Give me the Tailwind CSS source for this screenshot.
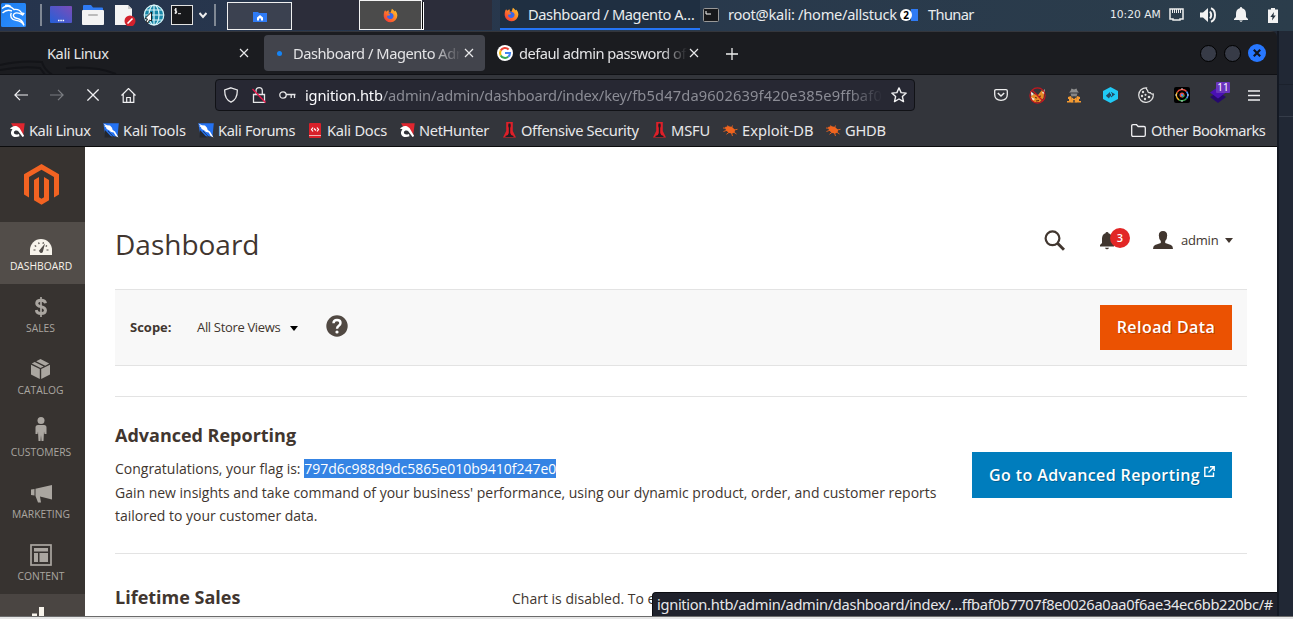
<!DOCTYPE html>
<html lang="en">
<head>
<meta charset="utf-8">
<title>Dashboard / Magento Admin</title>
<script src="https://cdn.jsdelivr.net/npm/@tailwindcss/browser@4"></script>
</head>
<body class="w-[1293px] h-[619px] overflow-hidden bg-[#e6e6e6] whitespace-nowrap font-['Noto_Sans',sans-serif]">
<svg class="absolute size-0">
  <defs>
    <linearGradient id="blue" x1="0" y1="0" x2="1" y2="1"><stop offset="0" stop-color="#1b7df0"/><stop offset="1" stop-color="#2f8fff"/></linearGradient>
    <linearGradient id="desk" x1="0" y1="1" x2="1" y2="0"><stop offset="0" stop-color="#2460d8"/><stop offset="1" stop-color="#7c4cb8"/></linearGradient>
    <linearGradient id="fire" x1="1" y1="0" x2="0" y2="1"><stop offset="0" stop-color="#ffd42e"/><stop offset=".5" stop-color="#ff7a2a"/><stop offset="1" stop-color="#f0283c"/></linearGradient>
    <symbol id="firefox" viewBox="0 0 16 16"><path fill="url(#fire)" d="M1.2 4.500C1.500 3.300 2.500 2.500 2.500 2.500L3.300 4c1-.9 2.400-1.300 3-1.200L6 4.500 8 5l1.500-4.200c1.500.8 2.500 2.200 2.800 3l.5-1.200C14.400 4 15.300 6 15.300 8.300A7.300 7.300 0 0 1 .8 9C.6 7.300.8 6 1.200 4.500z"/><path fill="#3a66e8" d="M5.500 5.300C7 4.600 10.500 5.200 11.200 7.600c.5 2.600-1.500 4.300-3.600 4.200-2.300-.1-3.500-2-3.300-3.600L7 8.100l.5-1.200z"/></symbol>
    <symbol id="tool" viewBox="0 0 16 16"><path fill="#2472f2" d="M.3 1.200h15.500L14.500 14.500 2.500 14z"/><path fill="#24272e" d="M2 8l7 7.500H1.500z"/><path fill="#fff" d="M.5 1.500L4 3.200l3 .3 2 2.200.7 2.300 2.300 1.500 3.500 6-2.800-1.500-2-3.500-2.700-.5L6 8.300 3.600 7 3 5.200.8 3.800l1.700.2z"/><path stroke="#24272e" stroke-width=".7" d="M5 9l6 6.300" fill="none"/></symbol>
    <symbol id="horse" viewBox="0 0 16 16"><path fill="#e0262f" d="M2 1.200h13.700l-1.500 12L9 5.500 4 4.500z"/><path fill="#fff" d="M.8 6.500L3 5C5 3.500 8 3.400 10.500 6l4.700 8-1.700 1-4-5.500C8.500 8 6 8 5 9.700c-.6 2 1 3 3.500 2.700l1.500-.4.5 2.300C7 16 2.300 15 2 11.500c-.2-2 .8-3.300 1.500-4.200z"/></symbol>
    <symbol id="tower" viewBox="0 0 13 16"><path fill="#dd2029" d="M3.200 0h6.600v9l3.200 6.500H0L3.200 9z"/><path fill="#1d1f24" d="M5.500 1.500h2l.3 2.500-.6 2v5l1 2 2.300 1v1H2.500v-1l2.300-1 1-2V6l-.6-2z"/></symbol>
    <symbol id="bug" viewBox="0 0 16 16"><path fill="#f0641e" d="M3 5l2.200-.6.3-1.400 1.200 1.200L10 5l3 2.800-.3 2.400L10.500 11.500 7 11 4 8.500z"/><path d="M1 6l4 .3M1.500 9.500L5 8.200M4.500 12.300L7 10.300M10.500 14l-1-3M14.500 12l-3-2M15.500 7.300l-4 .9M10.500 3.500L9.500 6" stroke="#f0641e" stroke-width=".9" fill="none"/></symbol>
    <symbol id="x" viewBox="0 0 10 10"><path d="M1 1l8 8M9 1L1 9" stroke="#e8e8ea" stroke-width="1.200" fill="none"/></symbol>
  </defs>
</svg>

<!-- Desktop panel -->
<header class="flex h-[31px] items-start overflow-hidden bg-linear-to-r from-[#26344d] to-[#2b3d4b] text-[14.67px] text-[#e9ecee]">
  <svg class="ml-[1px] mt-[3px] size-[25px] shrink-0" viewBox="0 0 25 25"><rect width="25" height="24" rx="1.500" fill="url(#blue)"/><path d="M1 5.500C5 2 10 3 13 6.500c3-.5 6 .5 7.500 3.500l2.200.5-1 1.500c-2.500-1.600-6-3.200-8.600-1.300-1.600 1.600-.6 4 2.400 4.600 4 .8 6.500 3 7.500 7-1.800-3-4.200-4.400-8-4.900C10.300 17 8.600 13 10.300 9.800M1.500 10c3-3 6.500-3.200 9.500-2M4 2.500c2-.5 4-.2 6 1" fill="none" stroke="#fff" stroke-width="1.400"/></svg>
  <div class="ml-[14px] mt-1 h-[22px] w-[2px] shrink-0 bg-[#7f8894]"></div>
  <svg class="ml-2 mt-[6px] h-[17px] w-[22px] shrink-0" viewBox="0 0 22 17"><rect width="22" height="17" rx="1" fill="url(#desk)"/><path d="M8 14.500h1.500M10.300 14.500h1.500M12.600 14.500h1.500" stroke="#fff" stroke-width="1.300"/></svg>
  <svg class="ml-[10px] mt-[5px] h-5 w-[22px] shrink-0" viewBox="0 0 22 20"><path d="M1 1q0-1 1-1h7l2 2.500h9q1 0 1 1V8H1z" fill="#2f7bf5"/><rect y="5" width="22" height="15" rx="1" fill="#f3f3f3"/><rect x="6" y="9" width="10" height="2" rx="1" fill="#bbb"/></svg>
  <svg class="ml-[11px] mt-1 h-[22px] w-[21px] shrink-0" viewBox="0 0 21 22"><path d="M0 1h13l4 4v16H0z" fill="#f4f4f4"/><path d="M13 1v4h4z" fill="#ccc"/><circle cx="15" cy="17" r="5.500" fill="#d3212c"/><path d="M12.500 19.500l5-5" stroke="#fff" stroke-width="1.600"/></svg>
  <svg class="ml-[7px] mt-1 size-[22px] shrink-0" viewBox="0 0 22 22"><circle cx="11" cy="11" r="10" fill="#1887a8"/><g fill="none" stroke="#d8f4f8" stroke-width="1.200"><circle cx="11" cy="11" r="9.800"/><ellipse cx="11" cy="11" rx="5" ry="10"/><path d="M11 1v20M1 11h20M2.500 6h17M2.500 16h17"/></g><path d="M8.500 8v9l-2-1-1.500 3-2-1 1.500-3-2.500-.5z" fill="#fff" stroke="#111" stroke-width=".9"/></svg>
  <svg class="ml-[6px] mt-[5px] h-5 w-[22px] shrink-0" viewBox="0 0 22 20"><rect x=".5" y=".5" width="21" height="19" fill="#17181b" stroke="#e2e2e2"/><path d="M5.800 4H4v1.800h1.600V8H3.500M4.700 3v6M7 8.700h3" stroke="#fff" stroke-width=".9" fill="none"/></svg>
  <svg class="ml-[6px] mt-3 h-[7px] w-2 shrink-0" viewBox="0 0 8 7"><path d="M.5 1L4 5 7.500 1" fill="none" stroke="#eee" stroke-width="2"/></svg>
  <div class="ml-[7px] mt-1 h-[22px] w-[2px] shrink-0 bg-[#7f8894]"></div>
  <div class="ml-[11px] mt-[2px] flex h-7 w-[65px] shrink-0 items-center justify-center border border-[#f0f0f0] bg-[#3b4150]">
    <svg class="mt-[1px] h-[10px] w-[14px]" viewBox="0 0 14 10"><path d="M0 0h5l1 1h8v9H0z" fill="#2f7bf5"/><path d="M7 3l3 2.500V8.500H8V6.500H6v2H4V5.500z" fill="#fff"/></svg>
  </div>
  <div class="flex h-[30px] w-[200px] shrink-0 bg-[#2c2d3a]">
    <div class="ml-[67px] flex h-[30px] w-[65px] shrink-0">
      <div class="flex h-[30px] w-[63px] items-center justify-center border border-[#f4f4f4] bg-[#4b4b4b]"><svg class="size-[15px]"><use href="#firefox"/></svg></div>
      <div class="mt-[2px] h-7 w-[2px] border-r border-b border-white bg-black"></div>
    </div>
  </div>
  <div class="ml-2 flex h-[30px] w-[200px] shrink-0 border-b-2 border-[#2474f5] bg-[#1f2f41]">
    <svg class="ml-1 mt-[7px] size-[15px] shrink-0"><use href="#firefox"/></svg>
    <div class="ml-[9px] w-[168px] leading-[29px] tracking-[-0.42px]">Dashboard / Magento A…</div>
  </div>
  <svg class="ml-[3px] mt-2 h-[14px] w-4 shrink-0" viewBox="0 0 16 14"><rect x=".5" y=".5" width="15" height="13" rx="1" fill="#17181b" stroke="#999"/><path d="M3 3v3h2M5 6h3" stroke="#fff" fill="none"/></svg>
  <div class="ml-[9px] w-[172px] shrink-0 leading-[29px] tracking-[-0.29px]">root@kali: /home/allstuck</div>
  <div class="mt-[9px] flex h-3 w-[18px] shrink-0 bg-linear-to-r from-transparent from-60% to-[#2f7bf5] to-60%"><div class="size-3 rounded-full bg-white text-center text-[10px] leading-3 font-bold text-black">2</div></div>
  <div class="ml-[10px] w-[182px] shrink-0 leading-[29px] tracking-[-0.65px]">Thunar</div>
  <div class="w-[59px] shrink-0 font-['DejaVu_Sans',sans-serif] text-[10.700px] leading-[29px]">10:20 AM</div>
  <svg class="mt-2 h-[13px] w-[15px] shrink-0" viewBox="0 0 15 13"><path d="M1 1h13v10H11v1H4v-1H1z" fill="none" stroke="#eee" stroke-width="1.500"/><path d="M3.500 1v4M5.500 1v4M7.500 1v4M9.500 1v4M11.500 1v4" stroke="#eee" stroke-width="1"/></svg>
  <svg class="ml-4 mt-[7px] h-4 w-[18px] shrink-0" viewBox="0 0 18 16"><path d="M0 5.500h3L8 1v14L3 10.500H0z" fill="#f2f2f2"/><path d="M10 4.500q2.500 3.500 0 7M11 1.300q4 1.500 4 6.700t-4 6.700" fill="none" stroke="#f2f2f2" stroke-width="2"/></svg>
  <svg class="ml-[16px] mt-[7px] h-[15px] w-[14px] shrink-0" viewBox="0 0 14 15"><path d="M7 0q1 0 1.200 1.300C11 2 12 4 12 7v3l2 2v1H0v-1l2-2V7c0-3 1-5 3.800-5.700Q6 0 7 0zM5 13.500h4L7 15z" fill="#f2f2f2"/></svg>
  <svg class="ml-5 mt-2 h-[15px] w-[10px] shrink-0" viewBox="0 0 10 15"><path d="M0 1.500h3V0h4v1.500h3V15H0z" fill="#f2f2f2"/><path d="M6 4L2.300 9h2.200L4 12.500 7.800 7.500H5.500z" fill="#26333f"/></svg>
</header>

<div class="flex h-[585px] bg-[#212835]">
  <!-- Browser window -->
  <main class="relative flex w-[1277px] shrink-0 flex-col overflow-hidden rounded-tr-md">
    <div class="relative flex h-11 shrink-0 overflow-hidden border-t border-b border-t-[#34363c] border-b-[#101115] bg-[#1b1c20] text-[14.67px] text-[#e4e4e6]">
      <svg class="absolute left-0 top-[28px] h-4 w-[130px]" viewBox="0 0 130 16"><path d="M0 5Q20 0 42 2q2 8 12 14M0 10q22-4 40-2l6 8M66 8q30-2 50 6" fill="none" stroke="#131418" stroke-width="2"/></svg>
      <div class="relative flex w-[264px] shrink-0 items-center"><div class="ml-[47px] w-[192px] tracking-[-0.45px]">Kali Linux</div><svg class="size-[10px]"><use href="#x"/></svg></div>
      <div class="mt-[3px] flex h-9 w-[221px] shrink-0 items-center rounded bg-[#42444c]">
        <div class="ml-[13px] size-[5px] rounded-full bg-[#1584f5]"></div>
        <div class="ml-[11px] w-[168px] overflow-hidden mask-r-from-83% tracking-[-0.47px]">Dashboard / Magento Adn</div>
        <svg class="ml-[3px] size-[10px]"><use href="#x"/></svg>
      </div>
      <div class="flex w-[225px] shrink-0 items-center">
        <svg class="ml-3 size-4" viewBox="0 0 16 16"><circle cx="8" cy="8" r="8" fill="#fff"/><g fill="none" stroke-width="2.100"><path d="M11.600 4.500A5 5 0 0 0 3.700 5.600" stroke="#ea4335"/><path d="M3.700 5.600a5 5 0 0 0 0 4.800" stroke="#fbbc05"/><path d="M3.700 10.400a5 5 0 0 0 7.500 1.400" stroke="#34a853"/><path d="M11.200 11.800A5 5 0 0 0 13 8H8" stroke="#4285f4"/></g></svg>
        <div class="ml-[6px] w-[168px] overflow-hidden mask-r-from-85% tracking-[-0.5px]">defaul admin password of</div>
        <svg class="ml-[2px] size-[10px]"><use href="#x"/></svg>
      </div>
      <svg class="ml-4 mt-[16px] size-3" viewBox="0 0 12 12"><path d="M6 0v12M0 6h12" stroke="#eee" stroke-width="1.300"/></svg>
      <div class="ml-auto mr-[11px] flex items-center gap-[7px]">
        <div class="size-[17px] rounded-full border border-black bg-[#373b47]"></div>
        <div class="size-[17px] rounded-full border border-black bg-[#373b47]"></div>
        <svg class="size-[18px]" viewBox="0 0 18 18"><circle cx="9" cy="9" r="9" fill="#2777ff"/><path d="M5.800 5.800l6.400 6.400M12.200 5.800l-6.400 6.400" stroke="#10131c" stroke-width="2.200"/></svg>
      </div>
    </div>

    <!-- Toolbar -->
    <div class="flex h-10 shrink-0 items-center bg-[#33353b]">
      <svg class="ml-[14px] h-3 w-[14px]" viewBox="0 0 14 12"><path d="M14 6H1M6 .8L.9 6 6 11.200" fill="none" stroke="#f0f0f2" stroke-width="1.200"/></svg>
      <svg class="ml-[22px] h-3 w-[14px]" viewBox="0 0 14 12"><path d="M0 6h13M8 .8L13.100 6 8 11.200" fill="none" stroke="#7b7d82" stroke-width="1.200"/></svg>
      <svg class="ml-[23px] size-3" viewBox="0 0 12 12"><path d="M.4.400l11.200 11.200M11.600.400L.4 11.600" stroke="#f0f0f2" stroke-width="1.300"/></svg>
      <svg class="ml-[22px] size-[15px]" viewBox="0 0 15 15"><path d="M.5 7.500l7-7 7 7M2.200 6v8.300h10.600V6M5.700 14V9.500h3.600V14" fill="none" stroke="#f0f0f2" stroke-width="1.200"/></svg>
      <div class="ml-[79px] flex h-8 w-[700px] items-center rounded border border-[#111216] bg-[#272833]">
        <svg class="ml-2 h-4 w-[14px]" viewBox="0 0 14 16"><path d="M7 .8L13.300 3C13.500 9 11.500 13.200 7 15.200 2.500 13.200.5 9 .7 3z" fill="none" stroke="#e6e6e8" stroke-width="1.300"/></svg>
        <svg class="ml-[14px] h-4 w-[14px]" viewBox="0 0 14 16"><path d="M1.500 7.500h11v7.800h-11zM4 7.500V4q0-3.300 3.200-3.300T10.300 4v3.500" fill="none" stroke="#e6e6e8" stroke-width="1.300"/><path d="M.5 2l13 13.500" stroke="#e8174b" stroke-width="1.400"/></svg>
        <svg class="ml-[13px] h-[10px] w-[17px]" viewBox="0 0 17 10"><circle cx="4" cy="5" r="3.200" fill="none" stroke="#e6e6e8" stroke-width="1.300"/><path d="M7 4.500h9.500M12.200 4.500V8M15.500 4.500V8" stroke="#e6e6e8" stroke-width="1.300"/></svg>
        <div class="ml-[9px] w-[578px] overflow-hidden text-[14.67px] tracking-[-0.18px] text-[#8b8c95] mask-r-from-94%"><span class="text-[#fbfbfe]">ignition.htb</span>/admin/admin/dashboard/index/key/<span class="tracking-[.15px]">fb5d47da9602639f420e385e9ffbaf0</span></div>
        <svg class="ml-[8px] size-4 shrink-0" viewBox="0 0 16 16"><path d="M8 .9l2.100 4.700 5.100.5-3.800 3.500 1.100 5L8 12l-4.500 2.600 1.100-5L.8 6.100l5.100-.5z" fill="none" stroke="#f0f0f2" stroke-width="1.400" stroke-linejoin="round"/></svg>
      </div>
      <div class="ml-auto mr-[17px] flex items-center">
        <svg class="h-3 w-[14px]" viewBox="0 0 14 12"><path d="M2 .7h10q1.300 0 1.300 1.300v3.500q0 5.800-6.300 5.800T.7 5.500V2Q.7.700 2 .7z" fill="none" stroke="#eee" stroke-width="1.300"/><path d="M3.800 4L7 7l3.200-3" fill="none" stroke="#eee" stroke-width="1.500"/></svg>
        <svg class="ml-[21px] size-[17px]" viewBox="0 0 17 17"><path d="M2 9l3-2 4 1 4-5 2 4-.5 4-3.500 4-5 .5-3-2z" fill="#e88a26"/><path d="M1.500 4l3.500 3-2.500 2zM15.500 2v5l-2.500-1zM2 10l4 2-2 1.500z" fill="#f3e6d8"/><path d="M6 10.500l2 .5M10 9.500l2-.5M7 14l3-.5" stroke="#5a2b14"/><circle cx="8.500" cy="8.500" r="7.600" fill="none" stroke="#c5171e" stroke-width="1.200"/><path d="M3 3l11 11" stroke="#c5171e" stroke-width="1.300"/></svg>
        <svg class="ml-[21px] h-[15px] w-[14px]" viewBox="0 0 14 15"><path d="M3.500 3L4.500.5 7 1.500 9.500.5l1 2.500 1.500 1.500H2z" fill="#8d8d8d"/><path d="M3.500 5.500h7L9.500 8.500h-5z" fill="#858585"/><path d="M1 9l3-1 1.500 6.500H0V13h2v-2H1zM13 9l-3-1-1.500 6.500H14V13h-2v-2h1z" fill="#f49a31"/><path d="M4.500 9l2.500 2 2.500-2v5.500h-5z" fill="#f49a31"/><path d="M5.500 8.500L7 11l1.500-2.500zM6.300 12h1.400v2.500H6.300z" fill="#383b42"/></svg>
        <svg class="ml-[22px] h-4 w-[15px]" viewBox="0 0 15 16"><path d="M7.500 0L15 4v8l-7.500 4L0 12V4z" fill="#20c9f5"/><path d="M2.800 8.800L7 5v2l2-1v2.500L7 9.500l-1 2zM12.200 7.200L8 5v5.500z" fill="#234a64"/></svg>
        <svg class="ml-[20px] size-4" viewBox="0 0 16 16"><path d="M8.500.8A7.300 7.300 0 1 0 15.200 7q-2 .5-2.800-1.300Q9.500 6 9.600 3.300 8 2.500 8.500.8z" fill="none" stroke="#ddd" stroke-width="1.300"/><g fill="#ddd"><circle cx="5" cy="5" r="1.200"/><circle cx="4" cy="9" r="1.200"/><circle cx="7.500" cy="7.800" r="1.100"/><circle cx="7" cy="12" r="1.200"/><circle cx="11" cy="10" r="1.300"/></g></svg>
        <svg class="ml-[20px] size-4" viewBox="0 0 16 16"><rect width="16" height="16" rx="2" fill="#000"/><g fill="none" stroke-width="1.500"><path d="M3 5.500A5.700 5.700 0 0 1 12.500 4.500" stroke="#e84a3a"/><path d="M12.500 4.500a5.700 5.700 0 0 1 0 7" stroke="#4a8df0"/><path d="M12.500 11.500a5.700 5.700 0 0 1-7.500 1.300" stroke="#37a853"/><path d="M5 12.800A5.700 5.700 0 0 1 3 5.500" stroke="#f3b52a"/></g><path d="M8 1v2M8 13v2M1 8h2M13 8h2" stroke="#ccc"/><circle cx="8" cy="8" r="2.500" fill="#e84a3a"/><path d="M8 8h2.500A2.500 2.500 0 0 1 8 10.500z" fill="#37a853"/><circle cx="8" cy="8" r="1.200" fill="#4a8df0"/></svg>
        <div class="relative ml-[20px] size-4"><svg class="size-4" viewBox="0 0 16 16"><path d="M8 5l8 5-8 6-8-6z" fill="#26086e"/><path d="M8 0l8 5.500-8 6-8-6z" fill="#4a10b4"/></svg><span class="absolute -top-[5px] left-[6px] h-[11px] w-[14px] rounded-[1px] bg-[#6a35bd] text-center text-[10px] leading-[11px] text-white">11</span></div>
        <svg class="ml-[22px] h-[11px] w-3" viewBox="0 0 12 11"><path d="M0 1h12M0 5.500h12M0 10h12" stroke="#f0f0f2" stroke-width="1.300"/></svg>
      </div>
    </div>

    <!-- Bookmarks -->
    <div class="flex h-8 shrink-0 items-center border-b border-[#0c0c0d] bg-[#33353b] pb-[1px] text-[14.67px] text-[#e8e8ea]">
      <svg class="ml-[9px] size-4"><use href="#horse"/></svg><div class="ml-1 w-[74px] tracking-[-0.45px]">Kali Linux</div>
      <svg class="size-4"><use href="#tool"/></svg><div class="ml-1 w-[75px] tracking-[-0.15px]">Kali Tools</div>
      <svg class="size-4"><use href="#tool"/></svg><div class="ml-1 w-[91px] tracking-[-0.35px]">Kali Forums</div>
      <svg class="h-[15px] w-[12px]" viewBox="0 0 12 15"><rect width="12" height="15" rx="1" fill="#d8202a"/><path d="M0 12.500h12" stroke="#f7d5d5" stroke-width=".8"/><path d="M4 4.500L2.500 6.500l1.500 2M8 4.500l1.500 2-1.500 2M5 5.500l2 2" stroke="#fff" fill="none" stroke-width="1.200"/></svg><div class="ml-[6px] w-[72px] tracking-[-0.25px]">Kali Docs</div>
      <svg class="size-4"><use href="#horse"/></svg><div class="ml-1 w-[84px] tracking-[-0.38px]">NetHunter</div>
      <svg class="h-4 w-[13px]"><use href="#tower"/></svg><div class="ml-[5px] w-[132px] tracking-[-0.37px]">Offensive Security</div>
      <svg class="h-4 w-[13px]"><use href="#tower"/></svg><div class="ml-[5px] w-[51px] tracking-[-0.15px]">MSFU</div>
      <svg class="size-4"><use href="#bug"/></svg><div class="ml-1 w-[83px]">Exploit-DB</div>
      <svg class="size-4"><use href="#bug"/></svg><div class="ml-1 tracking-[-0.25px]">GHDB</div>
      <svg class="ml-auto h-[13px] w-[15px]" viewBox="0 0 15 13"><path d="M.7 2q0-1.300 1.300-1.300h3.500l1.700 1.800H13q1.300 0 1.300 1.300V11q0 1.300-1.300 1.300H2Q.7 12.300.7 11z" fill="none" stroke="#f0f0f2" stroke-width="1.300"/></svg>
      <div class="ml-[5px] w-[126px] tracking-[-0.5px]">Other Bookmarks</div>
    </div>

    <!-- Page -->
    <div class="flex min-h-0 flex-1 bg-white font-['Open_Sans',sans-serif] text-[#41362f]">
      <nav class="w-[85px] shrink-0 overflow-hidden bg-[#373330] text-[10.300px] leading-[14px] text-[#aaa6a0]">
        <div class="flex h-[75px] justify-center pr-[2px] pt-[17px]"><svg class="h-[41px] w-[35px]" viewBox="0 0 35 41"><path fill="#f26322" d="M17.500 0L35 10.200v20.300l-5 2.900V13L17.500 5.800 5 13v20.400l-5-2.900V10.200z"/><path fill="#f26322" d="M10 15.900l5-2.900v20.300l2.500 1.500 2.500-1.500V13l5 2.900v20.300L17.500 40.800 10 36.300z"/></svg></div>
        <div class="flex h-[62px] flex-col items-center bg-[#524d49] pr-[3px] text-[#f7f3eb]"><div class="flex h-[37px] items-end pb-1"><svg class="h-4 w-[22px]" viewBox="0 0 22 16"><path d="M0 16v-5a11 11 0 0 1 22 0v5z" fill="#f7f3eb"/><path d="M3.500 11h2M4.700 6.500l1.500 1M8.500 3.500l.7 1.500M13.500 3.300l-.6 1.500M17 6.500l-1.300 1M18.500 11h-2" stroke="#524d49" stroke-width="1.200"/><path d="M15 4.500L12.800 13a2 2 0 0 1-3.600-1.500z" fill="#524d49"/></svg></div><div>DASHBOARD</div></div>
        <div class="flex h-[62px] flex-col items-center pr-[4px]"><div class="flex h-[37px] items-end pb-1"><svg class="h-5 w-3" viewBox="0 0 12 20"><path d="M10.500 6.200Q10 3.300 6 3.300T1.700 6.200Q1.700 8.800 6 9.600t4.500 3.700Q10.300 16.500 6 16.500T1.300 13" fill="none" stroke="#aaa6a0" stroke-width="2.900"/><path d="M6 0v20" stroke="#aaa6a0" stroke-width="1.700"/></svg></div><div>SALES</div></div>
        <div class="flex h-[62px] flex-col items-center pr-[4px]"><div class="flex h-[37px] items-end pb-[4px]"><svg class="h-5 w-[19px]" viewBox="0 0 19 20"><path fill="#aaa6a0" d="M0 5.800l8.800 4.300V20L0 15.500zM19 5.800l-8.800 4.300V20l8.800-4.500zM.8 4.500L3.700 3l9 4.400-3.200 1.500zM5.200 2.300L9.500 0l8.700 4.500-4 2.200z"/></svg></div><div>CATALOG</div></div>
        <div class="flex h-[62px] flex-col items-center pr-[3px]"><div class="flex h-[37px] items-end pb-1"><svg class="h-6 w-3" viewBox="0 0 12 24"><circle cx="6" cy="3.500" r="3.500" fill="#aaa6a0"/><path fill="#aaa6a0" d="M3 8h6q2.500 0 2.500 2.500V17h-2l-.5-2.500L8.500 24h-2L6 18l-.5 6h-2L3 14.500 2.500 17h-2v-6.500Q.5 8 3 8z"/></svg></div><div>CUSTOMERS</div></div>
        <div class="flex h-[62px] flex-col items-center pr-[3px]"><div class="flex h-[37px] items-end pb-1"><svg class="h-[18px] w-[22px]" viewBox="0 0 22 18"><path fill="#aaa6a0" d="M22 0v14.500L10 11.500l1 6H8L5.500 11V3.700zM4.500 4v6.500L1 10V4.500z"/></svg></div><div>MARKETING</div></div>
        <div class="flex h-[62px] flex-col items-center pr-[3px]"><div class="flex h-[37px] items-end pb-[3px]"><svg class="size-[22px]" viewBox="0 0 22 22"><rect x="1" y="1" width="20" height="20" fill="none" stroke="#aaa6a0" stroke-width="1.700"/><path fill="#aaa6a0" d="M4 4h14v3.500H4zM4 9h4v9H4zM9.500 9H18v9H9.500z"/></svg></div><div>CONTENT</div></div>
        <div class="flex h-[31px] justify-center bg-[#4a4542] pt-[13px] pr-[3px]"><svg class="h-5 w-5" viewBox="0 0 20 20"><path fill="#f7f3eb" d="M1 6.500h5V20H1zM8 0h5v20H8zM15 9h4v11h-4z"/></svg></div>
      </nav>

      <section class="flex min-w-0 flex-1 flex-col pl-[30px] pr-[30px]">
        <div class="flex h-[142px] shrink-0 pt-[77px]">
          <h1 class="text-[28px] leading-10">Dashboard</h1>
          <div class="ml-auto mr-[14px] mt-[2px] flex h-7 items-center">
            <svg class="size-[21px]" viewBox="0 0 21 21"><circle cx="8.500" cy="8.300" r="6.900" fill="none" stroke="#41362f" stroke-width="2.200"/><path d="M13.500 13.300l6.500 6.500" stroke="#41362f" stroke-width="3"/></svg>
            <div class="relative ml-[35px] h-5 w-[30px]"><svg class="mt-[2px] h-[18px] w-[14px]" viewBox="0 0 14 18"><path fill="#41362f" d="M7 0q1.500 0 1.500 1.300C11 2 12 4 12 7v4l2 2v1.500H0V13l2-2V7c0-3 1-5 3.500-5.700Q5.500 0 7 0zM5 15.700h4q-.5 1.600-2 1.600t-2-1.600z"/></svg><span class="absolute -top-[2px] left-[10px] size-5 rounded-full bg-[#e22626] text-center text-[11px] leading-5 font-semibold text-white">3</span></div>
            <svg class="ml-[23px] h-[18px] w-[20px]" viewBox="0 0 20 18"><path fill="#41362f" d="M10 0q4.200 0 4.200 4.500 0 3.500-2 5.500v2l5.800 2q2 .8 2 4H0q0-3.200 2-4l5.800-2v-2q-2-2-2-5.500Q5.800 0 10 0z"/></svg>
            <div class="ml-2 mt-[1px] w-[44px] text-[13px] tracking-[-0.2px]">admin</div>
            <svg class="h-[5px] w-2" viewBox="0 0 8 5"><path d="M0 0h8L4 5z" fill="#41362f"/></svg>
          </div>
        </div>
        <div class="flex h-[77px] w-[1132px] shrink-0 items-center border-y border-[#e3e3e3] bg-[#f8f8f8] text-[13px]">
          <div class="ml-[15px] w-[67px] font-bold">Scope:</div>
          <div class="w-[93px] tracking-[-0.33px]">All Store Views</div>
          <svg class="mt-[2px] h-[5px] w-2" viewBox="0 0 8 5"><path d="M0 0h8L4 5z" fill="#000"/></svg>
          <svg class="mb-[3px] ml-[28px] size-[22px]" viewBox="0 0 22 22"><circle cx="11" cy="11" r="10.700" fill="#514943"/><path d="M7.500 8.300Q7.500 5 11 5t3.500 3q0 1.500-1.700 2.700T11 13.700" fill="none" stroke="#fff" stroke-width="2.400"/><circle cx="11" cy="17" r="1.600" fill="#fff"/></svg>
          <div class="ml-auto mr-[15px] h-[45px] w-[132px] bg-[#eb5202] text-center text-[16px] leading-[45px] font-semibold tracking-[.45px] text-white text-shadow-[1px_1px_0_rgba(0,0,0,.25)]">Reload Data</div>
        </div>
        <div class="mt-[30px] flex h-[158px] w-[1132px] shrink-0 border-y border-[#e3e3e3]">
          <div class="w-[857px] pt-[24px] text-[14px] leading-[23.500px] tracking-[-0.01px]">
            <h2 class="mb-2 text-[18px] leading-7 font-bold">Advanced Reporting</h2>
            <p>Congratulations, your flag is: <span class="bg-[#3584e4] tracking-[0px] text-white">797d6c988d9dc5865e010b9410f247e0</span></p>
            <p>Gain new insights and take command of your business' performance, using our dynamic product, order, and customer reports<br>tailored to your customer data.</p>
          </div>
          <div class="mt-[55px] flex h-[46px] w-[260px] items-center bg-[#007dbd] pl-[17px] text-[16px] font-semibold tracking-[.4px] text-white text-shadow-[1px_1px_0_rgba(0,0,0,.25)]"><div class="w-[215px]">Go to Advanced Reporting</div><svg class="mb-[7px] size-[11px]" viewBox="0 0 11 11"><path d="M4.500 1.500H.8v8.700h8.700V6.500M6 .8h4.200V5M10 1L4.500 6.500" fill="none" stroke="#fff" stroke-width="1.400"/></svg></div>
        </div>
        <div class="flex pt-[29px]"><h2 class="w-[397px] text-[18px] leading-7 font-bold">Lifetime Sales</h2><div class="pt-[2px] text-[14px] leading-7">Chart is disabled. To e</div></div>
      </section>
    </div>
    <div class="absolute right-0 bottom-0 h-6 w-[625px] rounded-tl border-t border-l border-[#0c0d12] bg-[#20222c] pl-1 text-[14.67px] leading-[23px] tracking-[-0.32px] text-[#e8e8ea]">ignition.htb/admin/admin/dashboard/index/…ffbaf0b7707f8e0026a0aa0f6ae34ec6bb220bc/#</div>
  </main>
  <div class="flex-1 border-l-2 border-[#141923]"><div class="h-[54px] border-b border-[#1b212c]"></div><div class="h-8 border-b border-[#353c49]"></div></div>
</div>
<div class="h-[3px] border-t border-[#6b6b6b] bg-[#e6e6e6]"></div>
</body>
</html>
